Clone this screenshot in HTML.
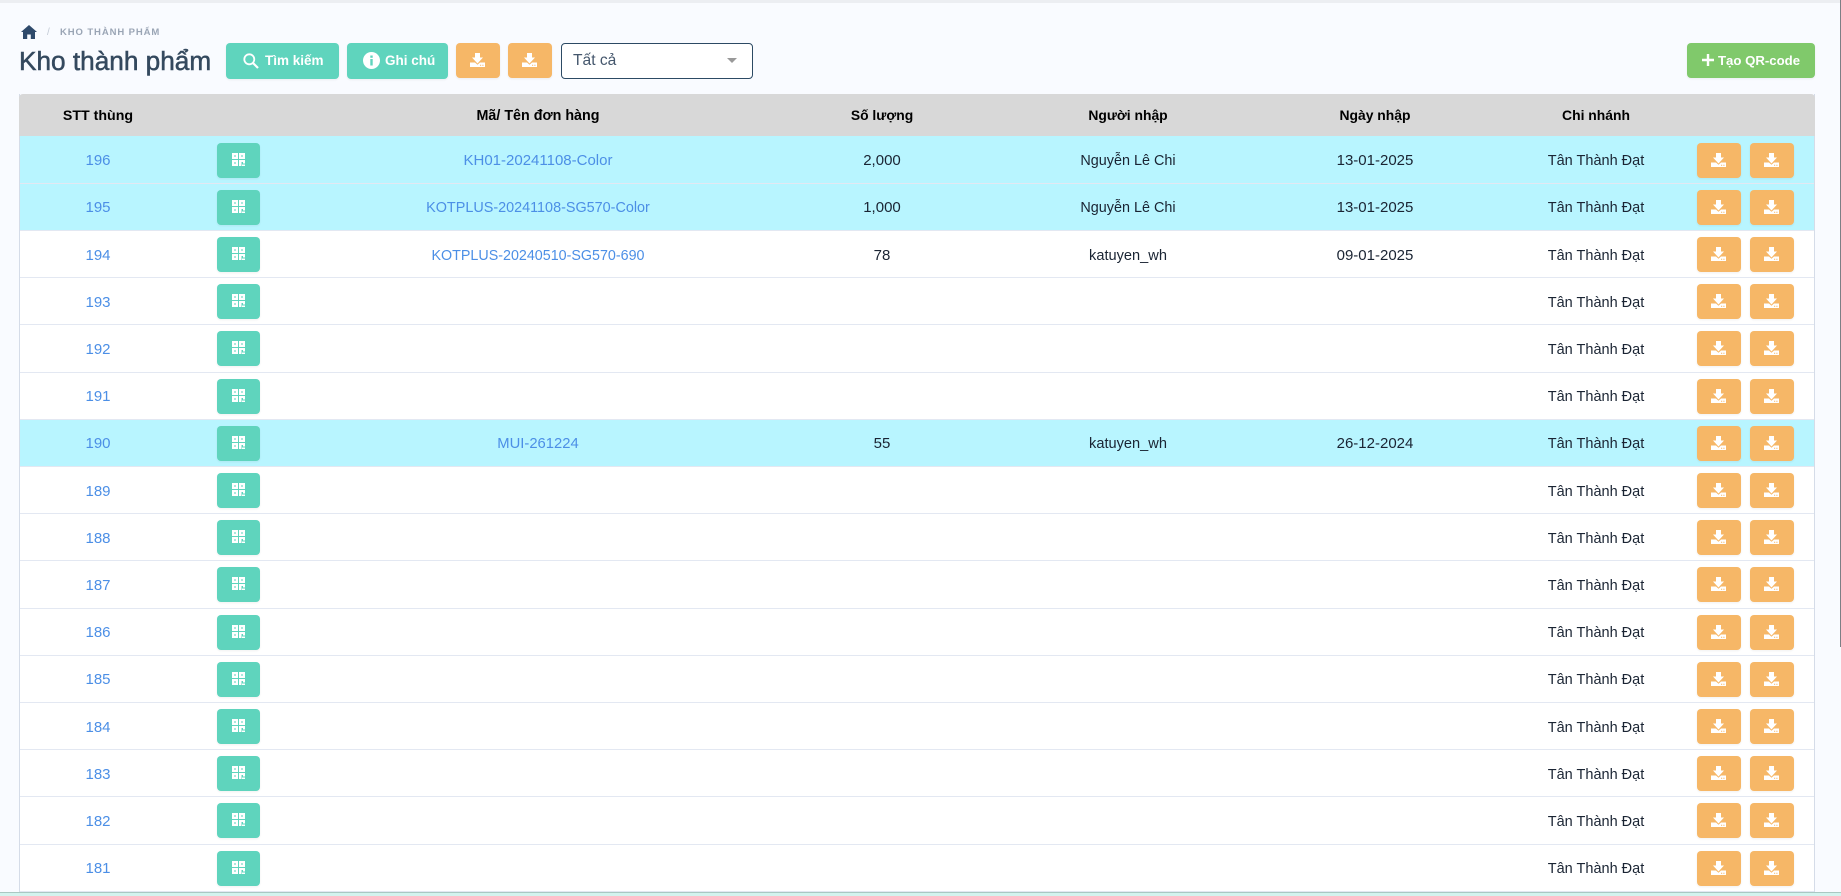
<!DOCTYPE html>
<html lang="vi"><head><meta charset="utf-8"><title>Kho thành phẩm</title>
<style>
*{box-sizing:border-box}
html,body{margin:0;padding:0;width:1841px;height:896px;overflow:hidden;background:#f9fbff;font-family:"Liberation Sans",sans-serif;color:#1a2433}
.a{position:absolute}
.btn{position:absolute;border-radius:4px;color:#fff;font-weight:700;font-size:13.5px;line-height:35px;box-shadow:0 1px 2px rgba(0,0,0,.06)}
.g{background:#5fd4bd}.o{background:#f6b767}.lg{background:#80c96b}
.btn svg{position:absolute}
.r{position:absolute;left:20px;width:1794px;height:47.2px;background:#fff}
.r::after{content:"";position:absolute;left:0;right:0;bottom:-1px;height:1px;background:#e3e8f2;z-index:1}
.r.c{background:#b8f5ff}
.r span{position:absolute;top:.6px;line-height:50px;font-size:14.500px;text-align:center;white-space:nowrap;width:300px}
.s{left:-72px;color:#4c8fe6;font-size:15px !important}
.m{left:368px;color:#4c8fe6}
.q{left:712px;font-size:15px !important}.n{left:958px}.d{left:1205px;font-size:15px !important}.b{left:1426px}
.h{position:absolute;top:94px;line-height:42px;font-size:13.900px;font-weight:700;color:#000;text-align:center;width:300px;white-space:nowrap}
.q1{left:197px;top:7px;width:43px;height:35px}
.d1{left:1677px;top:7px;width:44px;height:35px}
.d2{left:1730px;top:7px;width:44px;height:35px}
.q1 svg{left:15px;top:10px}
.d1 svg,.d2 svg{left:14px;top:10px}
</style></head><body>
<svg width="0" height="0" style="position:absolute"><defs>
<symbol id="dl" viewBox="0 0 15 14"><path fill="#fff" fill-rule="evenodd" d="M5 0h5v4.500h3l-5.500 6-5.500-6h3zM0 9.500h5l2.500 2.200 2.500-2.200h5V14H0zM10 11.800v1h1.200v-1zM12.300 11.800v1h1.200v-1z"/></symbol>
<symbol id="qr" viewBox="0 0 13 13"><path fill="#fff" fill-rule="evenodd" d="M0 0h6v6H0zM2.300 2.300v1.400h1.400V2.300zM7 0h6v6H7zM9.300 2.300v1.400h1.400V2.300zM0 7h6v6H0zM2.300 9.300v1.400h1.400V9.300zM7 7h6v3.500h-2V9H9.500v4H7zM10 11.500h3V13h-3z"/></symbol>
</defs></svg>

<div class="a" style="left:0;top:0;width:1841px;height:3px;background:#eceef2"></div>
<div class="a" style="left:1840px;top:0;width:1px;height:647px;background:#7c7f85"></div>

<svg class="a" style="left:21px;top:25px" width="16" height="14" viewBox="0 0 16 14"><path fill="#2f4a6b" d="M8 0l8 7h-2v7H9.800V9.500H6.200V14H2V7H0z"/></svg>
<div class="a" style="left:47px;top:25px;font-size:10px;line-height:15px;color:#c2c9d4">/</div>
<div class="a" style="left:60px;top:25px;font-size:9.500px;line-height:15px;font-weight:700;color:#9aa5b5;letter-spacing:.9px;white-space:nowrap">KHO THÀNH PHẨM</div>
<div class="a" style="left:19px;top:43px;font-size:26.200px;line-height:36px;font-weight:400;color:#34495e;-webkit-text-stroke:.5px #34495e;white-space:nowrap">Kho thành phẩm</div>

<div class="btn g" style="left:226px;top:43px;width:113px;height:36px"><svg style="left:17px;top:10px" width="16" height="16" viewBox="0 0 16 16"><circle cx="6.300" cy="6.300" r="5" fill="none" stroke="#fff" stroke-width="1.800"/><path d="M10 10l5 5" stroke="#fff" stroke-width="2.200"/></svg><span class="a" style="left:39px;top:0;white-space:nowrap">Tìm kiếm</span></div>
<div class="btn g" style="left:347px;top:43px;width:101px;height:36px"><svg style="left:16px;top:9px" width="17" height="17" viewBox="0 0 17 17"><circle cx="8.500" cy="8.500" r="8.500" fill="#fff"/><rect x="7.300" y="7" width="2.400" height="6.500" fill="#5fd4bd"/><rect x="7.300" y="3.500" width="2.400" height="2.300" fill="#5fd4bd"/></svg><span class="a" style="left:38px;top:0;white-space:nowrap">Ghi chú</span></div>
<div class="btn o" style="left:456px;top:43px;width:44px;height:35px"><svg style="left:14px;top:10px" width="15" height="14"><use href="#dl"/></svg></div>
<div class="btn o" style="left:508px;top:43px;width:44px;height:35px"><svg style="left:14px;top:10px" width="15" height="14"><use href="#dl"/></svg></div>
<div class="a" style="left:561px;top:43px;width:192px;height:36px;background:#fff;border:1px solid #2c4a64;border-radius:4px;font-size:15.600px;line-height:33px;color:#44566c;padding-left:11px">Tất cả<div class="a" style="left:165px;top:14px;width:0;height:0;border-left:5px solid transparent;border-right:5px solid transparent;border-top:5px solid #999"></div></div>
<div class="btn lg" style="left:1687px;top:43px;width:128px;height:35px;font-size:13.200px"><svg style="left:15px;top:11px" width="12" height="12" viewBox="0 0 12 12"><path fill="#fff" d="M4.800 0h2.400v4.800H12v2.400H7.200V12H4.800V7.200H0V4.800h4.800z"/></svg><span class="a" style="left:31px;top:0;white-space:nowrap">Tạo QR-code</span></div>

<div class="a" style="left:19px;top:94px;width:1796px;height:798px;border-left:1px solid #d5dce8;border-right:1px solid #d5dce8"></div>
<div class="a" style="left:19px;top:94px;width:1796px;height:42px;background:#d8d8d8;border-radius:4px 4px 0 0"></div>
<div class="h" style="left:-52px;font-size:14.200px;line-height:44px">STT thùng</div>
<div class="h" style="left:388px;font-size:14.300px;line-height:44px">Mã/ Tên đơn hàng</div>
<div class="h" style="left:732px">Số lượng</div>
<div class="h" style="left:978px">Người nhập</div>
<div class="h" style="left:1225px">Ngày nhập</div>
<div class="h" style="left:1446px">Chi nhánh</div>

<div class="r c" style="top:135.600px"><span class="s">196</span><span class="m" style="font-size:15px">KH01-20241108-Color</span><span class="q">2,000</span><span class="n" style="font-size:14.400px">Nguyễn Lê Chi</span><span class="d">13-01-2025</span><span class="b">Tân Thành Đạt</span><div class="btn g q1"><svg width="13" height="13"><use href="#qr"/></svg></div><div class="btn o d1"><svg width="15" height="14"><use href="#dl"/></svg></div><div class="btn o d2"><svg width="15" height="14"><use href="#dl"/></svg></div></div>
<div class="r c" style="top:182.800px"><span class="s">195</span><span class="m" style="font-size:14.400px">KOTPLUS-20241108-SG570-Color</span><span class="q">1,000</span><span class="n" style="font-size:14.400px">Nguyễn Lê Chi</span><span class="d">13-01-2025</span><span class="b">Tân Thành Đạt</span><div class="btn g q1"><svg width="13" height="13"><use href="#qr"/></svg></div><div class="btn o d1"><svg width="15" height="14"><use href="#dl"/></svg></div><div class="btn o d2"><svg width="15" height="14"><use href="#dl"/></svg></div></div>
<div class="r" style="top:230px"><span class="s">194</span><span class="m" style="font-size:14.300px">KOTPLUS-20240510-SG570-690</span><span class="q">78</span><span class="n" style="font-size:14.600px">katuyen_wh</span><span class="d">09-01-2025</span><span class="b">Tân Thành Đạt</span><div class="btn g q1"><svg width="13" height="13"><use href="#qr"/></svg></div><div class="btn o d1"><svg width="15" height="14"><use href="#dl"/></svg></div><div class="btn o d2"><svg width="15" height="14"><use href="#dl"/></svg></div></div>
<div class="r" style="top:277.200px"><span class="s">193</span><span class="b">Tân Thành Đạt</span><div class="btn g q1"><svg width="13" height="13"><use href="#qr"/></svg></div><div class="btn o d1"><svg width="15" height="14"><use href="#dl"/></svg></div><div class="btn o d2"><svg width="15" height="14"><use href="#dl"/></svg></div></div>
<div class="r" style="top:324.400px"><span class="s">192</span><span class="b">Tân Thành Đạt</span><div class="btn g q1"><svg width="13" height="13"><use href="#qr"/></svg></div><div class="btn o d1"><svg width="15" height="14"><use href="#dl"/></svg></div><div class="btn o d2"><svg width="15" height="14"><use href="#dl"/></svg></div></div>
<div class="r" style="top:371.600px"><span class="s">191</span><span class="b">Tân Thành Đạt</span><div class="btn g q1"><svg width="13" height="13"><use href="#qr"/></svg></div><div class="btn o d1"><svg width="15" height="14"><use href="#dl"/></svg></div><div class="btn o d2"><svg width="15" height="14"><use href="#dl"/></svg></div></div>
<div class="r c" style="top:418.800px"><span class="s">190</span><span class="m" style="font-size:14.800px">MUI-261224</span><span class="q">55</span><span class="n" style="font-size:14.600px">katuyen_wh</span><span class="d">26-12-2024</span><span class="b">Tân Thành Đạt</span><div class="btn g q1"><svg width="13" height="13"><use href="#qr"/></svg></div><div class="btn o d1"><svg width="15" height="14"><use href="#dl"/></svg></div><div class="btn o d2"><svg width="15" height="14"><use href="#dl"/></svg></div></div>
<div class="r" style="top:466px"><span class="s">189</span><span class="b">Tân Thành Đạt</span><div class="btn g q1"><svg width="13" height="13"><use href="#qr"/></svg></div><div class="btn o d1"><svg width="15" height="14"><use href="#dl"/></svg></div><div class="btn o d2"><svg width="15" height="14"><use href="#dl"/></svg></div></div>
<div class="r" style="top:513.200px"><span class="s">188</span><span class="b">Tân Thành Đạt</span><div class="btn g q1"><svg width="13" height="13"><use href="#qr"/></svg></div><div class="btn o d1"><svg width="15" height="14"><use href="#dl"/></svg></div><div class="btn o d2"><svg width="15" height="14"><use href="#dl"/></svg></div></div>
<div class="r" style="top:560.400px"><span class="s">187</span><span class="b">Tân Thành Đạt</span><div class="btn g q1"><svg width="13" height="13"><use href="#qr"/></svg></div><div class="btn o d1"><svg width="15" height="14"><use href="#dl"/></svg></div><div class="btn o d2"><svg width="15" height="14"><use href="#dl"/></svg></div></div>
<div class="r" style="top:607.600px"><span class="s">186</span><span class="b">Tân Thành Đạt</span><div class="btn g q1"><svg width="13" height="13"><use href="#qr"/></svg></div><div class="btn o d1"><svg width="15" height="14"><use href="#dl"/></svg></div><div class="btn o d2"><svg width="15" height="14"><use href="#dl"/></svg></div></div>
<div class="r" style="top:654.800px"><span class="s">185</span><span class="b">Tân Thành Đạt</span><div class="btn g q1"><svg width="13" height="13"><use href="#qr"/></svg></div><div class="btn o d1"><svg width="15" height="14"><use href="#dl"/></svg></div><div class="btn o d2"><svg width="15" height="14"><use href="#dl"/></svg></div></div>
<div class="r" style="top:702px"><span class="s">184</span><span class="b">Tân Thành Đạt</span><div class="btn g q1"><svg width="13" height="13"><use href="#qr"/></svg></div><div class="btn o d1"><svg width="15" height="14"><use href="#dl"/></svg></div><div class="btn o d2"><svg width="15" height="14"><use href="#dl"/></svg></div></div>
<div class="r" style="top:749.200px"><span class="s">183</span><span class="b">Tân Thành Đạt</span><div class="btn g q1"><svg width="13" height="13"><use href="#qr"/></svg></div><div class="btn o d1"><svg width="15" height="14"><use href="#dl"/></svg></div><div class="btn o d2"><svg width="15" height="14"><use href="#dl"/></svg></div></div>
<div class="r" style="top:796.400px"><span class="s">182</span><span class="b">Tân Thành Đạt</span><div class="btn g q1"><svg width="13" height="13"><use href="#qr"/></svg></div><div class="btn o d1"><svg width="15" height="14"><use href="#dl"/></svg></div><div class="btn o d2"><svg width="15" height="14"><use href="#dl"/></svg></div></div>
<div class="r" style="top:843.600px"><span class="s">181</span><span class="b">Tân Thành Đạt</span><div class="btn g q1"><svg width="13" height="13"><use href="#qr"/></svg></div><div class="btn o d1"><svg width="15" height="14"><use href="#dl"/></svg></div><div class="btn o d2"><svg width="15" height="14"><use href="#dl"/></svg></div></div>

<div class="a" style="left:0;top:892px;width:1841px;height:4px;background:#d3f3ee;border-top:1px solid #a9c8c2;z-index:2"></div>
</body></html>
